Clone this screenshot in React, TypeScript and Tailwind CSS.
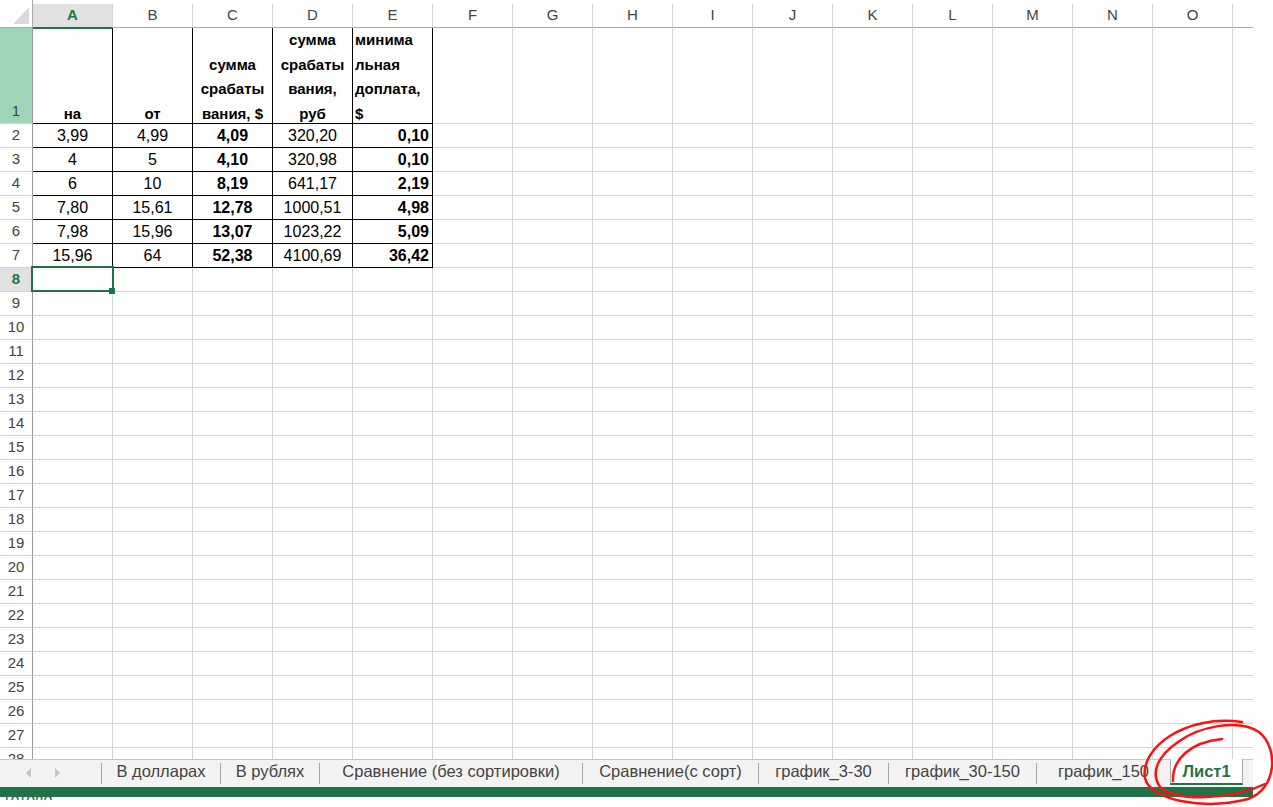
import React from 'react';

const COLS = ['A', 'B', 'C', 'D', 'E', 'F', 'G', 'H', 'I', 'J', 'K', 'L', 'M', 'N', 'O'];

const DATA: string[][] = [
  ['3,99', '4,99', '4,09', '320,20', '0,10'],
  ['4', '5', '4,10', '320,98', '0,10'],
  ['6', '10', '8,19', '641,17', '2,19'],
  ['7,80', '15,61', '12,78', '1000,51', '4,98'],
  ['7,98', '15,96', '13,07', '1023,22', '5,09'],
  ['15,96', '64', '52,38', '4100,69', '36,42'],
];

const TABS: { label: string; w: string }[] = [
  { label: 'В долларах', w: 'w-[118px]' },
  { label: 'В рублях', w: 'w-[98px]' },
  { label: 'Сравнение (без сортировки)', w: 'w-[262px]' },
  { label: 'Сравнение(с сорт)', w: 'w-[175px]' },
  { label: 'график_3-30', w: 'w-[129px]' },
  { label: 'график_30-150', w: 'w-[147px]' },
  { label: 'график_150', w: 'w-[133px]' },
];

function HeaderRow() {
  return (
    <div className="flex h-[28px]">
      <div className="w-[33px] h-full border-r border-b border-[#ababab] bg-white relative">
        <svg width="32" height="27" className="absolute left-0 top-0">
          <polygon points="29,7 29,24 13,24" fill="#dadada" />
        </svg>
      </div>
      {COLS.map((c) => (
        <div key={c} className="w-[80px] h-full pt-[4px] flex flex-col bg-white">
          {c === 'A' ? (
            <div className="flex-1 flex items-center justify-center bg-[#e1e1e1] border-r border-r-[#d4d4d4] border-b-2 border-b-[#217346] font-bold text-[#217346] text-[15px]">
              {c}
            </div>
          ) : (
            <div className="flex-1 flex items-center justify-center border-r border-r-[#d4d4d4] border-b border-b-[#ababab] text-[#444] text-[15px]">
              {c}
            </div>
          )}
        </div>
      ))}
      <div className="w-[20px] h-full pt-[4px] flex flex-col bg-white">
        <div className="flex-1 border-b border-b-[#ababab]" />
      </div>
    </div>
  );
}

function Row1() {
  const hdr = 'w-[80px] h-full border-r border-b border-black flex flex-col justify-end font-bold text-[15px] leading-[24.4px] text-black';
  return (
    <div className="flex h-[96px]">
      <div className="w-[33px] h-full bg-[#9fd5b7] border-r border-r-[#9b9b9b] border-b border-b-[#d4d4d4] flex items-end justify-center text-[15px] text-[#444] pb-[1px]">
        1
      </div>
      <div className={hdr}>
        <div className="text-center mb-[-3px]">на</div>
      </div>
      <div className={hdr}>
        <div className="text-center mb-[-3px]">от</div>
      </div>
      <div className={hdr}>
        <div className="text-center mb-[-3px] whitespace-nowrap">
          <div>сумма</div>
          <div>срабаты</div>
          <div>вания, $</div>
        </div>
      </div>
      <div className={hdr}>
        <div className="text-center mb-[-3px] whitespace-nowrap">
          <div>сумма</div>
          <div>срабаты</div>
          <div>вания,</div>
          <div>руб</div>
        </div>
      </div>
      <div className={hdr}>
        <div className="text-left pl-[2px] mb-[-3px] whitespace-nowrap">
          <div>минима</div>
          <div>льная</div>
          <div>доплата,</div>
          <div>$</div>
        </div>
      </div>
      {COLS.slice(5).map((c) => (
        <div key={c} className="w-[80px] h-full border-r border-b border-[#d4d4d4]" />
      ))}
      <div className="w-[20px] h-full border-b border-[#d4d4d4]" />
    </div>
  );
}

function DataRow({ n }: { n: number }) {
  const vals = n >= 2 && n <= 7 ? DATA[n - 2] : null;
  const selected = n === 8;
  return (
    <div className="flex h-[24px]">
      <div
        className={
          selected
            ? 'w-[33px] h-full bg-[#e1e1e1] border-r border-r-[#9b9b9b] border-b border-b-[#d4d4d4] flex items-center justify-center text-[15px] font-bold text-[#217346]'
            : 'w-[33px] h-full bg-white border-r border-r-[#9b9b9b] border-b border-b-[#d4d4d4] flex items-center justify-center text-[15px] text-[#444]'
        }
      >
        {n}
      </div>
      {COLS.map((c, i) => {
        if (vals && i < 5) {
          const v = vals[i];
          if (i === 4) {
            return (
              <div key={c} className="w-[80px] h-full border-r border-b border-black flex items-center justify-end pr-[3px] text-[16px] font-bold text-black">
                {v}
              </div>
            );
          }
          return (
            <div
              key={c}
              className={
                i === 2
                  ? 'w-[80px] h-full border-r border-b border-black flex items-center justify-center text-[16px] font-bold text-black'
                  : 'w-[80px] h-full border-r border-b border-black flex items-center justify-center text-[16px] text-black'
              }
            >
              {v}
            </div>
          );
        }
        if (selected && i === 0) {
          return (
            <div key={c} className="w-[80px] h-full border-r border-b border-[#d4d4d4] relative">
              <div className="absolute left-[-2px] top-[-2px] w-[83px] h-[26px] border-2 border-[#217346] z-10" />
              <div className="absolute left-[76px] top-[20px] w-[6px] h-[6px] bg-[#217346] z-20" />
            </div>
          );
        }
        return <div key={c} className="w-[80px] h-full border-r border-b border-[#d4d4d4]" />;
      })}
      <div className="w-[20px] h-full border-b border-[#d4d4d4]" />
    </div>
  );
}

function TabBar() {
  return (
    <div className="flex h-[28px] w-[1253px] bg-[#f3f3f3] border-t border-[#c6c6c6] text-[16.5px] text-[#444]">
      <div className="w-[101px] h-full flex items-center pb-[4px] relative">
        <svg width="101" height="27" className="absolute left-0 top-0">
          <polygon points="31,8 31,18 26,13" fill="#c4c4c4" />
          <polygon points="55,8 55,18 60,13" fill="#c4c4c4" />
        </svg>
      </div>
      <div className="w-px h-[21px] mt-[3px] bg-[#a6a6a6]" />
      {TABS.map((t, i) => (
        <React.Fragment key={t.label}>
          <div className={`${t.w} h-full flex items-center justify-center pb-[4px] whitespace-nowrap`}>{t.label}</div>
          {i < TABS.length - 1 && <div className="w-px h-[21px] mt-[3px] bg-[#a6a6a6]" />}
        </React.Fragment>
      ))}
      <div className="w-[73px] h-[26px] mt-[-1px] bg-white border-x border-[#ababab] border-b-2 border-b-[#217346] flex items-center justify-center font-bold text-[#217346] pt-[1px]">
        Лист1
      </div>
    </div>
  );
}

export default function App() {
  const rows: number[] = [];
  for (let i = 2; i <= 28; i++) rows.push(i);
  return (
    <div className="w-[1273px] h-[807px] bg-white overflow-hidden relative font-['Liberation_Sans',Arial,sans-serif]">
      <div className="w-[1253px] h-[759px] overflow-hidden">
        <HeaderRow />
        <Row1 />
        {rows.map((n) => (
          <DataRow key={n} n={n} />
        ))}
      </div>
      <TabBar />
      <div className="w-[1253px] h-[10px] bg-[#217346]" />
      <div className="h-[3px] overflow-hidden pl-[5px]">
        <div className="text-[16px] leading-[16px] mt-[-5px] text-[#555]">готово</div>
      </div>
      <svg className="absolute left-0 top-0 pointer-events-none" width="1273" height="807">
        <path
          d="M1173,781 C1172,760 1190,742 1222,739"
          fill="none"
          stroke="#ff1010"
          strokeWidth="2.5"
          strokeLinecap="round"
        />
        <path
          d="M1242,722 C1185,714 1140,748 1145,778 C1150,801 1205,810 1248,799 C1277,789 1279,748 1259,732 C1238,718 1198,727 1178,742 C1158,756 1150,772 1160,787 C1176,802 1232,800 1265,784"
          fill="none"
          stroke="#ff1010"
          strokeWidth="2.5"
          strokeLinecap="round"
        />
      </svg>
    </div>
  );
}
